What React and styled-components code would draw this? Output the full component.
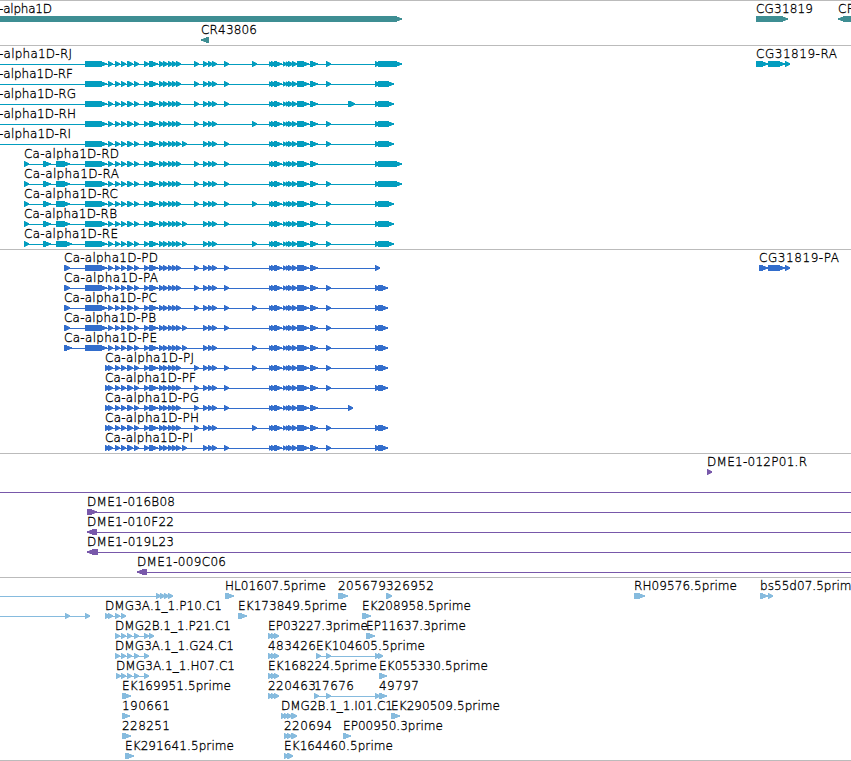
import React from 'react';
import styled, { createGlobalStyle } from 'styled-components';

// exons shared by every Ca-alpha1D isoform, [start, end]
const HEAD = [[108, 113], [115, 120], [121, 126], [127, 133], [134, 139], [144, 149], [149, 158], [159, 164], [163, 168], [168, 173], [172, 177], [176, 181]];
const MID = [[203, 208], [208, 213], [212, 217]];
const TAIL = [[269, 273], [271, 276], [274, 282], [283, 287], [286, 290], [288, 293], [292, 297], [297, 309], [310, 318]];

const optional = {
  182: [182, 187],
  194: [194, 199],
  224: [224, 229],
  252: [252, 257],
  326: [326, 331],
  348: [348, 355],
};

// an isoform = its first exons + shared ones + optional ones + its end
const isoform = (label, x, w, from, start, extras, end) => [
  {
    label,
    x,
    w,
    line: [from, end[0][0]],
    exons: [...start, ...HEAD, ...MID, ...TAIL, ...extras.map((e) => optional[e]), ...end],
  },
];

const big = [[85, 107]];
const utr = [[24, 29], [43, 51], [56, 70], [85, 107]];
const utrLong = [[24, 29], [43, 51], [56, 72], [85, 107]];
const long = [[375, 380], [378, 402]];
const short = [[375, 380], [378, 394]];
const coding = [[375, 380], [378, 388]];
const cds = [[64, 70], [85, 107]];
const cdsLong = [[64, 72], [85, 107]];
const small = [[105, 110]];
const clump = (x) => [[x, x + 5], [x + 3, x + 8], [x + 6, x + 11]];

const est = (label, x, w, len = 9) => ({ label, x, w, exons: [[x, x + len]] });

const bands = [
  {
    name: 'gene',
    color: '#3e8e93',
    rowHeight: 21,
    rows: [
      [
        { label: '-alpha1D', x: -1, w: 53, exons: [[-10, 402]] },
        { label: 'CG31819', x: 756, w: 57, exons: [[756, 788]] },
        { label: 'CR', x: 838, w: 17, exons: [[838, 870]], reverse: true },
      ],
      [{ label: 'CR43806', x: 201, w: 56, exons: [[201, 209]], reverse: true }],
    ],
  },
  {
    name: 'transcript',
    color: '#039dbf',
    rows: [
      [
        ...isoform('-alpha1D-RJ', -1, 73, -5, big, [194, 224, 252, 326], long),
        { label: 'CG31819-RA', x: 756, w: 81, line: [756, 786], exons: [[756, 768], [768, 785], [785, 790]] },
      ],
      isoform('-alpha1D-RF', -1, 74, -5, big, [194, 224, 326], short),
      isoform('-alpha1D-RG', -1, 77, -5, big, [194, 224, 348], short),
      isoform('-alpha1D-RH', -1, 77, -5, big, [194, 252, 326], short),
      isoform('-alpha1D-RI', -1, 72, -5, big, [182, 224, 326], short),
      isoform('Ca-alpha1D-RD', 24, 95, 24, utr, [194, 224], long),
      isoform('Ca-alpha1D-RA', 24, 95, 24, utr, [194, 224, 326], long),
      isoform('Ca-alpha1D-RC', 24, 94, 24, utr, [194, 224, 252, 326], short),
      isoform('Ca-alpha1D-RB', 24, 93, 24, utr, [182, 224, 326], short),
      isoform('Ca-alpha1D-RE', 24, 94, 24, utrLong, [182, 252, 326], short),
    ],
  },
  {
    name: 'protein',
    color: '#326dcc',
    rows: [
      [
        ...isoform('Ca-alpha1D-PD', 64, 94, 64, cds, [194, 224], [[375, 380]]),
        { label: 'CG31819-PA', x: 759, w: 80, line: [759, 786], exons: [[759, 768], [768, 785], [785, 790]] },
      ],
      isoform('Ca-alpha1D-PA', 64, 94, 64, cds, [194, 224, 326], coding),
      isoform('Ca-alpha1D-PC', 64, 93, 64, cds, [194, 224, 252, 326], coding),
      isoform('Ca-alpha1D-PB', 64, 92, 64, cds, [182, 224, 326], coding),
      isoform('Ca-alpha1D-PE', 64, 93, 64, cdsLong, [182, 252, 326], coding),
      isoform('Ca-alpha1D-PJ', 105, 89, 105, small, [194, 224, 252, 326], coding),
      isoform('Ca-alpha1D-PF', 105, 91, 105, small, [194, 224, 326], coding),
      isoform('Ca-alpha1D-PG', 105, 94, 105, small, [194, 224], [[348, 353]]),
      isoform('Ca-alpha1D-PH', 105, 94, 105, small, [194, 252, 326], coding),
      isoform('Ca-alpha1D-PI', 105, 88, 105, small, [182, 224, 326], coding),
    ],
  },
  {
    name: 'bac',
    color: '#7858aa',
    rows: [
      [{ label: 'DME1-012P01.R', x: 707, w: 100, exons: [[707, 712]] }],
      [{ line: [0, 851], exons: [] }],
      [{ label: 'DME1-016B08', x: 87, w: 88, line: [87, 851], exons: [[87, 97]] }],
      [{ label: 'DME1-010F22', x: 87, w: 87, line: [92, 851], exons: [[87, 97]], reverse: true }],
      [{ label: 'DME1-019L23', x: 87, w: 87, line: [92, 851], exons: [[87, 98]], reverse: true }],
      [{ label: 'DME1-009C06', x: 137, w: 89, line: [142, 851], exons: [[137, 147]], reverse: true }],
    ],
  },
  {
    name: 'est',
    color: '#86bbde',
    rows: [
      [
        { line: [0, 170], exons: [[156, 161], [160, 165], [164, 169], [168, 173]] },
        est('HL01607.5prime', 225, 101),
        est('205679', 338, 48, 10),
        est('326952', 386, 48, 6),
        est('RH09576.5prime', 634, 103, 11),
        { label: 'bs55d07.5prime', x: 760, w: 99, exons: [[760, 768], [768, 773]] },
      ],
      [
        { line: [0, 88], exons: [[65, 70], [85, 90]] },
        { label: 'DMG3A.1_1.P10.C1', x: 105, w: 117, line: [105, 122], exons: [[105, 110], [108, 113], [115, 120], [121, 126]] },
        est('EK173849.5prime', 238, 109),
        est('EK208958.5prime', 362, 109),
      ],
      [
        { label: 'DMG2B.1_1.P21.C1', x: 115, w: 116, line: [115, 150], exons: [[115, 120], [121, 126], [127, 132], [134, 139], [144, 149], [149, 154]] },
        { label: 'EP03227.3prime', x: 268, w: 100, exons: clump(268) },
        est('EP11637.3prime', 366, 100),
      ],
      [
        { label: 'DMG3A.1_1.G24.C1', x: 115, w: 119, line: [115, 146], exons: [[115, 120], [121, 126], [127, 132], [134, 139], [144, 149]] },
        { label: '483426', x: 268, w: 48, exons: clump(268) },
        { label: 'EK104605.5prime', x: 316, w: 109, line: [316, 380], exons: [[316, 321], [326, 331], [375, 380], [378, 383]] },
      ],
      [
        { label: 'DMG3A.1_1.H07.C1', x: 116, w: 119, line: [116, 146], exons: [[116, 121], [121, 126], [127, 132], [134, 139], [144, 149]] },
        { label: 'EK168224.5prime', x: 268, w: 109, exons: clump(268) },
        est('EK055330.5prime', 379, 109, 8),
      ],
      [
        est('EK169951.5prime', 122, 109),
        { label: '220463', x: 268, w: 48, exons: clump(268) },
        { label: '17676', x: 314, w: 40, line: [314, 380], exons: [[314, 319], [326, 331], [375, 380]] },
        est('49797', 379, 40, 8),
      ],
      [
        est('190661', 122, 48, 8),
        { label: 'DMG2B.1_1.I01.C1', x: 281, w: 112, exons: [[281, 286], [284, 289], [287, 292], [291, 297]] },
        est('EK290509.5prime', 391, 109),
      ],
      [
        est('228251', 122, 48, 9),
        { label: '220694', x: 284, w: 48, exons: [[284, 289], [287, 292], [291, 297]] },
        est('EP00950.3prime', 343, 100, 8),
      ],
      [
        est('EK291641.5prime', 125, 109),
        { label: 'EK164460.5prime', x: 284, w: 109, exons: [[284, 289], [287, 293]] },
      ],
    ],
  },
];

// box with a stepped head, 6px tall
const arrow = ([start, end], reverse) => {
  const len = end - start;
  const a = len > 7 ? 5 : 3.5;
  const b = len > 7 ? 2.5 : 1.5;
  if (reverse) {
    return `M${end} 15H${start + a}V16H${start + b}V17H${start}V19H${start + b}V20H${start + a}V21H${end}Z`;
  }
  return `M${start} 15H${end - a}V16H${end - b}V17H${end}V19H${end - b}V20H${end - a}V21H${start}Z`;
};

const Feature = ({ label, x, w, line, exons, reverse, color }) => (
  <g fill={color}>
    {line && <rect x={line[0]} y="18" width={line[1] - line[0]} height="1" />}
    <path d={exons.map((exon) => arrow(exon, reverse)).join('')} />
    {label && (
      <Label x={x} y="12" textLength={w}>
        {label}
      </Label>
    )}
  </g>
);

const App = () => {
  return (
    <Browser>
      <GlobalStyle />
      {bands.map((band) => (
        <Band key={band.name}>
          {band.rows.map((row, i) => (
            <Row key={i} $height={band.rowHeight}>
              {row.map((feature, j) => (
                <Feature key={j} color={band.color} {...feature} />
              ))}
            </Row>
          ))}
        </Band>
      ))}
    </Browser>
  );
};

export default App;

const GlobalStyle = createGlobalStyle`
  body {
    margin: 0;
    background: #fff;
  }
`;

const Browser = styled.main`
  box-sizing: border-box;
  width: 851px;
  height: 761px;
  overflow: hidden;
  border-bottom: 1px solid #bbb;
`;

const Band = styled.section`
  display: flex;
  flex-direction: column;
  border-top: 1px solid #bbb;
  padding-bottom: 3px;

  &:first-of-type {
    padding-bottom: 2px;
  }
`;

const Row = styled.svg`
  display: block;
  flex: none;
  width: 851px;
  height: ${({ $height }) => $height || 20}px;
  overflow: visible;
`;

const Label = styled.text`
  font-family: 'DejaVu Sans', sans-serif;
  font-size: 12px;
  font-weight: 200;
  fill: #000;
  stroke: #000;
  stroke-width: 0.3px;
`;
